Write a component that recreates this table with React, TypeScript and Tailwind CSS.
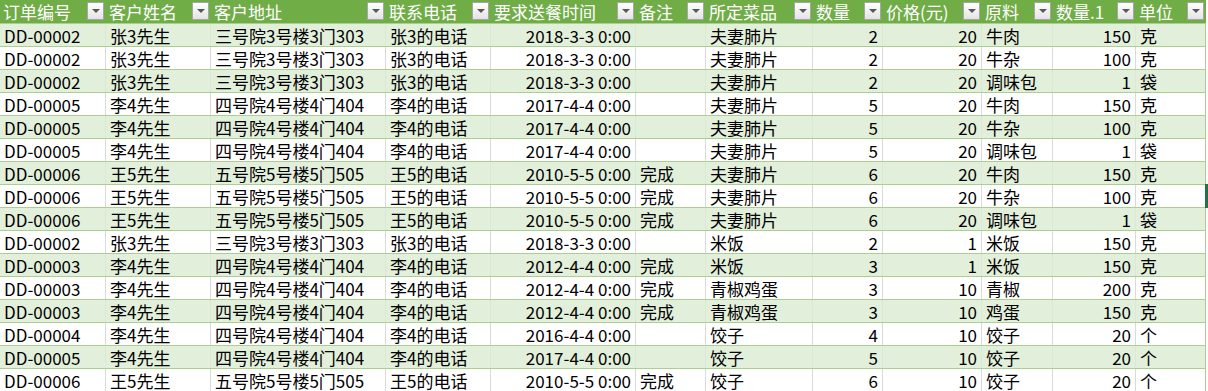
import React from 'react'

const cols = [
  { title: '订单编号', w: 106, right: false },
  { title: '客户姓名', w: 105, right: false },
  { title: '客户地址', w: 175, right: false },
  { title: '联系电话', w: 105, right: false },
  { title: '要求送餐时间', w: 145, right: true },
  { title: '备注', w: 70, right: false },
  { title: '所定菜品', w: 107, right: false },
  { title: '数量', w: 70, right: true },
  { title: '价格(元)', w: 99, right: true },
  { title: '原料', w: 71, right: false },
  { title: '数量.1', w: 83, right: true },
  { title: '单位', w: 70, right: false },
]

const zhang = ['DD-00002', '张3先生', '三号院3号楼3门303', '张3的电话', '2018-3-3 0:00', '']
const li5 = ['DD-00005', '李4先生', '四号院4号楼4门404', '李4的电话', '2017-4-4 0:00', '']
const wang = ['DD-00006', '王5先生', '五号院5号楼5门505', '王5的电话', '2010-5-5 0:00', '完成']
const li3 = ['DD-00003', '李4先生', '四号院4号楼4门404', '李4的电话', '2012-4-4 0:00', '完成']
const li4 = ['DD-00004', '李4先生', '四号院4号楼4门404', '李4的电话', '2016-4-4 0:00', '']

const rows: string[][] = [
  [...zhang, '夫妻肺片', '2', '20', '牛肉', '150', '克'],
  [...zhang, '夫妻肺片', '2', '20', '牛杂', '100', '克'],
  [...zhang, '夫妻肺片', '2', '20', '调味包', '1', '袋'],
  [...li5, '夫妻肺片', '5', '20', '牛肉', '150', '克'],
  [...li5, '夫妻肺片', '5', '20', '牛杂', '100', '克'],
  [...li5, '夫妻肺片', '5', '20', '调味包', '1', '袋'],
  [...wang, '夫妻肺片', '6', '20', '牛肉', '150', '克'],
  [...wang, '夫妻肺片', '6', '20', '牛杂', '100', '克'],
  [...wang, '夫妻肺片', '6', '20', '调味包', '1', '袋'],
  [...zhang, '米饭', '2', '1', '米饭', '150', '克'],
  [...li3, '米饭', '3', '1', '米饭', '150', '克'],
  [...li3, '青椒鸡蛋', '3', '10', '青椒', '200', '克'],
  [...li3, '青椒鸡蛋', '3', '10', '鸡蛋', '150', '克'],
  [...li4, '饺子', '4', '10', '饺子', '20', '个'],
  [...li5, '饺子', '5', '10', '饺子', '20', '个'],
  [...wang, '饺子', '6', '10', '饺子', '20', '个'],
]

const FilterButton = () => (
  <div className="absolute right-[2px] top-[2px] w-[17px] h-[18px] border border-[#a6a6a6] bg-gradient-to-b from-white to-[#e4e4e4] flex items-center justify-center">
    <svg width="8" height="4" viewBox="0 0 8 4">
      <path d="M0 0 L8 0 L4 4 Z" fill="#595959" />
    </svg>
  </div>
)

export default function App() {
  return (
    <div
      className="relative w-[1208px] h-[391px] overflow-hidden bg-white text-[17px] text-black"
      style={{ fontFamily: '"Noto Sans CJK SC", "Noto Sans", sans-serif' }}
    >
      <div className="flex h-[23px] w-[1206px] bg-[#70ad47]">
        {cols.map((c) => (
          <div
            key={c.title}
            className="relative shrink-0 h-full px-[3px] leading-[24px] text-white whitespace-nowrap"
            style={{ width: c.w }}
          >
            {c.title}
            <FilterButton />
          </div>
        ))}
      </div>
      {rows.map((row, i) => {
        const green = i % 2 === 0
        return (
          <div
            key={i}
            className={
              green
                ? 'flex h-[23px] w-[1206px] bg-[#e2efda] border-t border-[#a9d08e]'
                : 'flex h-[23px] w-[1206px] bg-white border-t border-[#a9d08e]'
            }
          >
            {row.map((cell, j) => (
              <div
                key={j}
                className={[
                  'shrink-0 h-full px-[4px] leading-[24px] whitespace-nowrap',
                  cols[j].right ? 'text-right' : 'text-left',
                  j === 11
                    ? 'border-r border-[#a9d08e]'
                    : green
                      ? 'border-r border-[#dbe8d3]'
                      : 'border-r border-[#dadada]',
                ].join(' ')}
                style={{ width: cols[j].w }}
              >
                {cell}
              </div>
            ))}
          </div>
        )
      })}
      {/* selected cell edge */}
      <div className="absolute left-[1205px] top-[184px] w-[3px] h-[24px] bg-[#217346]" />
    </div>
  )
}
